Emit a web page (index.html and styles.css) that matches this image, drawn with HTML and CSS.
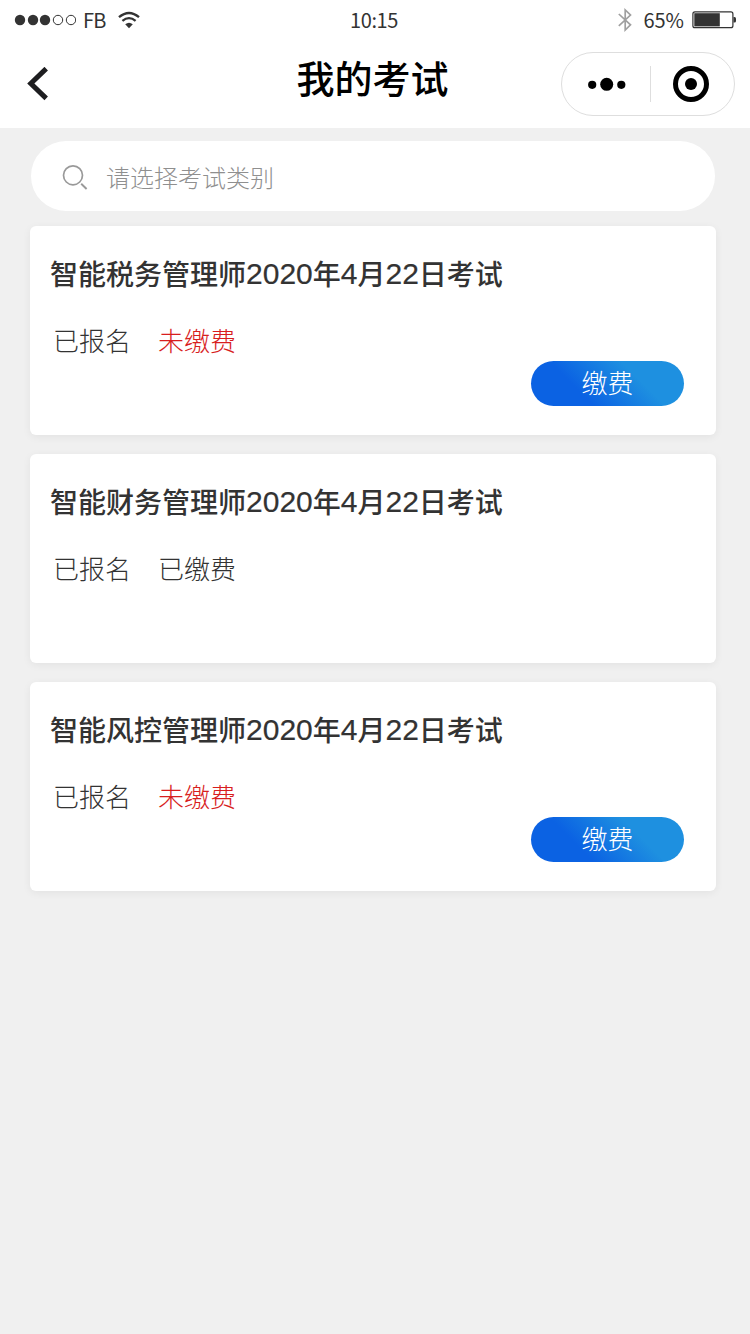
FILE: index.html
```
<!DOCTYPE html>
<html lang="zh-CN">
    <head>
        <title>我的考试</title>
        
        <meta charset="utf-8">
        
        <link rel="stylesheet" href="styles.css">
    </head>
    
    <body>
        <div class="status">
            <div class="left">
                <svg class="signal" width="62" height="12" viewBox="0 0 62 12">
                    <circle cx="6" cy="6" r="5.2" fill="#333"/>
                    <circle cx="19" cy="6" r="5.2" fill="#333"/>
                    <circle cx="31" cy="6" r="5.2" fill="#333"/>
                    <circle cx="44" cy="6" r="4.7" fill="none" stroke="#333"/>
                    <circle cx="57" cy="6" r="4.7" fill="none" stroke="#333"/>
                </svg>
                <span class="carrier">FB</span>
                <svg class="wifi" width="22" height="18" viewBox="0 0 22 18">
                    <path d="M1 6.2 Q11 -2.2 21 6.2" fill="none" stroke="#333" stroke-width="2.4"/>
                    <path d="M4.4 9.9 Q11 4.4 17.6 9.9" fill="none" stroke="#333" stroke-width="2.3"/>
                    <path d="M7.2 13.2 Q11 10.2 14.8 13.2 L11 17.2 Z" fill="#333"/>
                </svg>
            </div>
            <div class="time">10:15</div>
            <div class="right">
                <svg class="bluetooth" width="14" height="24" viewBox="0 0 14 24">
                    <path d="M.8 6 L12.5 16.8 L7.2 22 V2 L12.5 7 L.8 17.8" fill="none" stroke="#a0a0a0" stroke-width="1.7"/>
                </svg>
                <span class="percent">65%</span>
                <svg class="battery" width="45" height="18" viewBox="0 0 45 18">
                    <rect x=".9" y=".9" width="40" height="15.8" rx="2" fill="none" stroke="#333" stroke-width="1.2"/>
                    <rect x="2.3" y="2.2" width="25.5" height="13.2" fill="#333"/>
                    <path d="M41.5 6 h1 q1.5 0 1.5 1.5 v2.5 q0 1.5 -1.5 1.5 h-1 z" fill="#333"/>
                </svg>
            </div>
        </div>
        
        <div class="navbar">
            <svg class="back" width="22" height="34" viewBox="0 0 22 34">
                <path d="M19.2 1.6 L3.8 16.5 L19.2 31.4" fill="none" stroke="#1e1e20" stroke-width="5"/>
            </svg>
            <h1 class="title">我的考试</h1>
            <div class="capsule">
                <svg class="more" width="38" height="14" viewBox="0 0 38 14">
                    <circle cx="4.2" cy="7.8" r="4.1"/>
                    <circle cx="18.7" cy="7.3" r="6.5"/>
                    <circle cx="33.3" cy="7.8" r="4.1"/>
                </svg>
                <div class="divider"></div>
                <svg class="close" width="36" height="36" viewBox="0 0 36 36">
                    <circle cx="18" cy="18" r="15.5" fill="none" stroke="#000" stroke-width="5"/>
                    <circle cx="18" cy="18" r="6"/>
                </svg>
            </div>
        </div>
        
        <div class="search">
            <svg class="glass" width="26" height="26" viewBox="0 0 26 26">
                <circle cx="11" cy="11.3" r="9.5" fill="none" stroke="#999" stroke-width="1.7"/>
                <path d="M19.2 19.7 L24.6 25" stroke="#999" stroke-width="1.9"/>
            </svg>
            <span class="placeholder">请选择考试类别</span>
        </div>
        
        <div class="list">
            <div class="card">
                <h2 class="name">智能税务管理师<b>2020</b>年<b>4</b>月<b>22</b>日考试</h2>
                <div class="state"><span>已报名</span><span class="unpaid">未缴费</span></div>
                <div class="pay">缴费</div>
            </div>
            <div class="card">
                <h2 class="name">智能财务管理师<b>2020</b>年<b>4</b>月<b>22</b>日考试</h2>
                <div class="state"><span>已报名</span><span>已缴费</span></div>
            </div>
            <div class="card">
                <h2 class="name">智能风控管理师<b>2020</b>年<b>4</b>月<b>22</b>日考试</h2>
                <div class="state"><span>已报名</span><span class="unpaid">未缴费</span></div>
                <div class="pay">缴费</div>
            </div>
        </div>
    </body>
</html>
```

FILE: styles.css
```
* {
    box-sizing: border-box;
}
body {
    margin: 0;
    min-height: 1334px;
    background: #f0f0f0;
    color: #333;
    font-family: "Noto Sans CJK SC", sans-serif;
}
svg {
    display: block;
    flex: none;
}
.status {
    display: grid;
    grid-template-columns: 1fr auto 1fr;
    align-items: center;
    height: 40px;
    padding: 0 13px 0 14px;
    background: #fff;
    font: 20px/40px "Noto Sans CJK SC", sans-serif;
}
.left, .right {
    display: flex;
    align-items: center;
}
.right {
    justify-content: flex-end;
}
.time {
    padding-right: 3px;
    letter-spacing: -0.4px;
}
.carrier {
    margin: 0 12px 0 7px;
    letter-spacing: -0.8px;
}
.percent {
    margin: 0 8px 0 11px;
}
.navbar {
    display: grid;
    grid-template-columns: 157px 1fr 174px;
    align-items: center;
    height: 88px;
    padding: 0 15px 0 27px;
    background: #fff;
}
.title {
    margin: 0;
    padding-bottom: 14px;
    color: #000;
    font-size: 38px;
    line-height: 56px;
    font-weight: 500;
    text-align: center;
}
.capsule {
    display: flex;
    align-items: center;
    height: 64px;
    padding-left: 26px;
    border: 1px solid #dedede;
    border-radius: 32px;
}
.divider {
    width: 1px;
    height: 36px;
    margin: 0 22px 0 24px;
    background: #dedede;
}
.search {
    display: flex;
    align-items: center;
    gap: 18px;
    height: 70px;
    margin: 13px 35px 15px 31px;
    padding: 2px 31px 0;
    background: #fff;
    border-radius: 35px;
}
.placeholder {
    color: #8f8f8f;
    font-size: 24px;
    font-weight: 300;
    line-height: 36px;
}
.list {
    display: flex;
    flex-direction: column;
    gap: 19px;
    padding: 0 34px 0 30px;
}
.card {
    display: flex;
    flex-direction: column;
    height: 209px;
    padding: 27px 32px 0 20px;
    background: #fff;
    border-radius: 6px;
    box-shadow: 0 2px 8px rgba(0,0,0,0.06);
}
.name {
    height: 40px;
    margin: 0;
    font-size: 28px;
    font-weight: 500;
    line-height: 40px;
}
.name b {
    font: 30px/30px "Liberation Sans", sans-serif;
    vertical-align: 1px;
    -webkit-text-stroke: 0.2px #333;
}
.state {
    display: flex;
    gap: 27px;
    margin-top: 27px;
    padding-left: 3px;
    font-size: 26px;
    font-weight: 300;
    line-height: 40px;
}
.unpaid {
    color: #d81e1e;
}
.pay {
    align-self: flex-end;
    width: 153px;
    height: 45px;
    background: linear-gradient(45deg, #0b62e3 32%, #1e90e0 68%);
    margin-top: 1px;
    border-radius: 23px;
    color: #fff;
    font-size: 26px;
    font-weight: 300;
    line-height: 41px;
    text-align: center;
}
```
